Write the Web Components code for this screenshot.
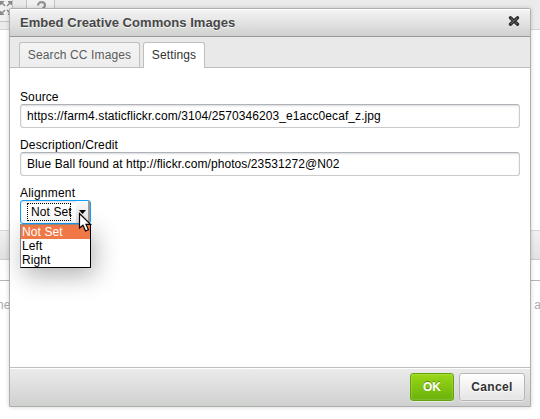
<!DOCTYPE html>
<html lang="en"><head><meta charset="utf-8"><title>Embed Creative Commons Images</title>
<style>
html,body{margin:0;width:540px;height:419px;overflow:hidden;background:#fff}
body{font:12px "Liberation Sans",Arial,sans-serif;color:#000}
</style></head><body>
<app-desktop>
  <editor-page slot="page"></editor-page>
  <modal-dialog heading="Embed Creative Commons Images" style="--hls:.05px">
    <tab-strip slot="tabs"><tab-item style="--w:121px;--ls:.12px">Search CC Images</tab-item><tab-item selected style="--w:62px;--ls:.12px">Settings</tab-item></tab-strip>
    <text-field label="Source" value="https://farm4.staticflickr.com/3104/2570346203_e1acc0ecaf_z.jpg" style="--ls:.09px;--lls:.1px"></text-field>
    <text-field label="Description/Credit" value="Blue Ball found at http://flickr.com/photos/23531272@N02" style="--ls:.085px;--lls:.15px"></text-field>
    <select-field label="Alignment"><span>Not Set</span><span>Left</span><span>Right</span></select-field>
    <dialog-button slot="actions" primary style="--w:44px">OK</dialog-button>
    <dialog-button slot="actions" style="--w:66px;--ls:.35px">Cancel</dialog-button>
  </modal-dialog>
</app-desktop>
<script>
const define=(name,html)=>customElements.define(name,class extends HTMLElement{
  constructor(){super();const t=document.createElement('template');
    t.innerHTML=typeof html==='function'?html(this):html;
    this.attachShadow({mode:'open'}).append(t.content.cloneNode(true));}
});
define('app-desktop',`<style>
:host{display:grid;width:540px;height:419px;overflow:hidden}
::slotted(*){grid-area:1/1}
</style><slot name="page"></slot><slot></slot>`);

define('editor-page',`<style>
:host{display:flex;flex-direction:column;height:419px;color:#aaa}
.bar{height:29px;background:#ebebeb;border-bottom:1px solid #d4d4d4;display:flex}
.b{height:21px;border:1px solid #c4c4c4;border-top:0;background:#f0f0f0}
.b svg{display:block;overflow:visible}
.body{height:200px}
.foot{height:28px;background:linear-gradient(#f0f0f0,#e2e2e2);border-top:1px solid #d8d8d8;border-bottom:1px solid #ccc}
.gap{height:20px;border-bottom:1px solid #b5b5b5}
.txt{display:flex;justify-content:space-between;padding:17px 0 0;line-height:14px}
.txt span:first-child{margin-left:-3px}
.txt span:last-child{margin-right:-1px}
</style><div class="bar">
<div class="b" style="width:12px;border-left:0"><svg width="12" height="16" fill="none" stroke="#888" stroke-width="1.4"><path d="M.7 5V1.7H4M1 2L5 6M8 1.7H11.3V5M11 2L7 6M.7 11V14.3H4M1 14L5 10M8 14.3H11.3V11M11 14L7 10"/></svg></div>
<div class="b" style="width:27px;margin-left:13px"><svg width="27" height="16" fill="none" stroke="#929292" stroke-width="2.2"><path d="M11 5.5C11 1 18 1 18 5.5C18 8 15 7 15 11"/></svg></div></div>
<div class="body"></div><div class="foot"></div><div class="gap"></div><div class="txt"><span>ne</span><span>a</span></div>`);

define('modal-dialog',e=>`<style>
:host{display:flex;flex-direction:column;box-sizing:border-box;position:relative;width:522px;height:399px;margin:8px 0 0 9px;border:1px solid #afafaf;border-radius:2px 2px 0 0;background:#fff;box-shadow:0 0 4px rgba(0,0,0,.19)}
header{box-sizing:border-box;flex:0 0 28px;display:flex;align-items:center;justify-content:space-between;padding:0 10px;border-bottom:1px solid #999;background:linear-gradient(#f5f5f5,#cfd1cf);box-shadow:inset 0 1px #fff;font-weight:bold;font-size:13px;color:#474747;text-shadow:0 1px 0 rgba(255,255,255,.75);border-radius:2px 2px 0 0}
header span{letter-spacing:var(--hls,0);line-height:16px}
header svg{display:block;margin-top:-3px}
main{flex:1;padding:22px 10px 0;display:flex;flex-direction:column;gap:9px}
footer{box-sizing:border-box;flex:0 0 39px;display:flex;justify-content:flex-end;gap:5px;padding:5px 5px 0;border-top:1px solid #bfbfbf;background:linear-gradient(#ebebeb,#cfd1cf);box-shadow:inset 0 1px #fff}
</style><header><span>${e.getAttribute('heading')}</span><svg width="12" height="12" viewBox="0 0 12 12"><path d="M2.4 2.8L9.6 9.2M9.6 2.8L2.4 9.2" stroke="#222" stroke-width="3.2" stroke-linecap="round"/><path d="M2.7 3L9.3 9M9.3 3L2.7 9" stroke="#606060" stroke-width="1.1" stroke-linecap="round"/></svg></header><slot name="tabs"></slot><main><slot></slot></main><footer><slot name="actions"></slot></footer>`);

define('tab-strip',`<style>
:host{box-sizing:border-box;flex:0 0 31px;display:flex;align-items:flex-start;gap:3px;padding:5px 9px 0;background:#e9e9e9;border-bottom:1px solid #bfbfbf}
</style><slot></slot>`);
define('tab-item',`<style>
:host{box-sizing:border-box;width:var(--w);height:25px;border:1px solid #bfbfbf;border-bottom:0;border-radius:3px 3px 0 0;background:linear-gradient(#f4f4f4,#ededed);color:#5b5b5b;text-align:center;line-height:25px;letter-spacing:var(--ls,0);white-space:nowrap}
:host([selected]){height:26px;margin-bottom:-1px;background:#fff;color:#333}
</style><slot></slot>`);
define('text-field',e=>`<style>
:host{display:block;height:39px}
label{display:block;height:14px;line-height:14px;letter-spacing:var(--lls,0)}
.box{box-sizing:border-box;height:24px;padding:0 6px;line-height:23px;border:1px solid #c9cccf;border-top-color:#aeb3b9;border-radius:3px;box-shadow:inset 0 1px 2px rgba(0,0,0,.15);letter-spacing:var(--ls,0);white-space:nowrap}
</style><label>${e.getAttribute('label')}</label><div class="box">${e.getAttribute('value')}</div>`);
define('select-field',e=>`<style>
:host{display:block;position:relative;width:71px}
label{display:block;line-height:14px;letter-spacing:.2px}
.box{box-sizing:border-box;width:71px;height:24px;display:flex;align-items:center;border:1px solid #139ff7;border-radius:3px;padding-left:6px;box-shadow:inset 0 1px 2px rgba(0,0,0,.15);background:#fff}
.focus{box-sizing:border-box;width:44px;height:18px;border:1px dotted #000;padding-left:3px;line-height:16px;white-space:nowrap;letter-spacing:.1px}
.arrow{margin-left:auto;width:14px;height:22px;background:linear-gradient(#fafafa,#e4e4e4);border-right:2px solid #999;box-sizing:border-box;display:flex;justify-content:center;padding-top:9px}
.arrow svg{display:block}
.menu{box-sizing:border-box;position:absolute;left:0;top:38px;width:71px;height:44px;border:1px solid #000;border-left-color:#888;border-top-color:#888;background:#fff;box-shadow:4px 8px 24px rgba(0,0,0,.3)}
::slotted(span){display:block;height:14px;line-height:14px;padding-left:1px;letter-spacing:.1px}
::slotted(span:first-of-type){background:#f07746;color:#fff}
.cursor{position:absolute;left:58px;top:26px}
</style><label>${e.getAttribute('label')}</label>
<div class="box"><div class="focus">Not Set</div><div class="arrow"><svg width="7" height="4"><path d="M0 0H7L3.5 4Z"/></svg></div></div>
<div class="menu"><slot></slot></div>
<svg class="cursor" width="14" height="22" viewBox="0 0 14 22"><path d="M1.5 1.5V16L5 13.2L7.5 19L10.4 17.7L8 12.4H12.5Z" fill="#fff" stroke="#000" stroke-width="1.2"/></svg>`);
define('dialog-button',`<style>
:host{box-sizing:border-box;width:var(--w);height:28px;border:1px solid #b6b6b6;border-radius:3px;background:linear-gradient(#fff,#e4e4e4);box-shadow:0 1px 0 rgba(255,255,255,.5),inset 0 0 2px rgba(255,255,255,.5);text-align:center;font-size:12px;line-height:26px;font-weight:bold;color:#333;letter-spacing:var(--ls,0);text-shadow:0 1px #fff}
:host([primary]){border-color:#62a60a;background:linear-gradient(#9ad717,#69b10b);color:#fff;text-shadow:0 -1px rgba(55,85,0,.6)}
</style><slot></slot>`);
</script></body></html>
